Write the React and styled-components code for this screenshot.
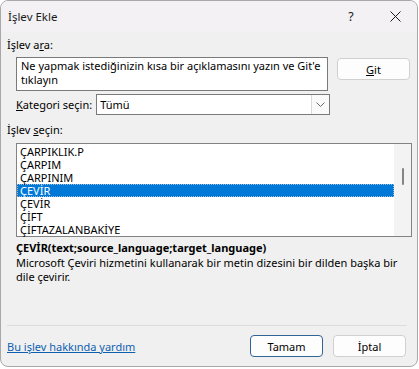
import React from 'react';
import styled, { createGlobalStyle } from 'styled-components';

const GlobalStyle = createGlobalStyle`
  html, body {
    margin: 0;
    padding: 0;
    background: #ffffff;
  }
  body {
    font-family: "Noto Sans", "Open Sans", sans-serif;
    font-size: 11px;
    color: #000;
  }
`;

const Window = styled.div`
  width: 416px;
  height: 365px;
  border: 1px solid #a8a8a8;
  border-radius: 8px;
  overflow: hidden;
  display: flex;
  flex-direction: column;
  background: #f0f0f0;
`;

const TitleBar = styled.div`
  height: 31px;
  display: flex;
  align-items: center;
  padding-left: 7px;
  background: #f3f1f3;
`;

const Title = styled.span`
  flex: 1;
  font-size: 11.5px;
  color: #1b1b1b;
`;

const TitleButton = styled.div`
  width: 44px;
  height: 31px;
  display: flex;
  align-items: center;
  justify-content: center;
  font-size: 12.5px;
  color: #1b1b1b;
`;

const Body = styled.div`
  flex: 1;
  display: flex;
  flex-direction: column;
  padding: 5px 6px 0 6px;
`;

const Label = styled.div`
  line-height: 15px;
`;

const SearchRow = styled.div`
  display: flex;
  align-items: flex-start;
  gap: 9px;
  margin-top: 5px;
  padding-left: 9px;
`;

const SearchBox = styled.div`
  width: 302px;
  height: 30px;
  background: #fff;
  border: 1px solid #7a7a7a;
  padding: 1px 4px;
  line-height: 14px;
`;

const Button = styled.div`
  width: 71px;
  height: 20px;
  border: 1px solid ${(p) => (p.$primary ? '#2f6595' : '#d0d0d0')};
  border-radius: 4px;
  background: #fdfdfd;
  display: flex;
  align-items: center;
  justify-content: center;
  margin-top: ${(p) => p.$top || 0}px;
`;

const CategoryRow = styled.div`
  display: flex;
  align-items: center;
  gap: 4px;
  margin-top: 3px;
  padding-left: 9px;
`;

const Select = styled.div`
  width: 232px;
  height: 19px;
  background: #fff;
  border: 1px solid #7a7a7a;
  display: flex;
  align-items: center;
`;

const SelectValue = styled.span`
  flex: 1;
  padding-left: 3px;
`;

const SelectArrow = styled.div`
  width: 17px;
  height: 19px;
  border-left: 1px solid #d9d9d9;
  background: #fafafa;
  display: flex;
  align-items: center;
  justify-content: center;
`;

const ListLabel = styled(Label)`
  margin-top: 7px;
`;

const ListBox = styled.div`
  margin: 6px 0 0 9px;
  width: 394px;
  height: 92px;
  border: 1px solid #828282;
  background: #fff;
  display: flex;
`;

const Items = styled.div`
  flex: 1;
  padding-top: 1px;
`;

const Item = styled.div`
  height: 13px;
  line-height: 13px;
  padding-left: 3px;
  box-sizing: border-box;
  background: ${(p) => (p.$selected ? '#0078d7' : 'transparent')};
  color: ${(p) => (p.$selected ? '#fff' : '#000')};
  outline: ${(p) => (p.$selected ? '1px dotted #9bb8d8' : 'none')};
  outline-offset: -1px;
`;

const ScrollBar = styled.div`
  width: 17px;
  background: #f3f3f3;
  display: flex;
  justify-content: center;
`;

const Thumb = styled.div`
  width: 2px;
  height: 17px;
  margin-top: 24px;
  background: #858585;
  border-radius: 1px;
`;

const Signature = styled.div`
  margin-top: 3px;
  padding-left: 9px;
  font-weight: 700;
  line-height: 15px;
`;

const Description = styled.div`
  padding-left: 9px;
  line-height: 14px;
  margin-top: 1px;
  width: 392px;
`;

const Separator = styled.div`
  margin-top: auto;
  height: 1px;
  background: #dcdcdc;
  margin-right: 4px;
`;

const Footer = styled.div`
  display: flex;
  align-items: center;
  height: 40px;
  padding-right: 5px;
`;

const HelpLink = styled.a`
  flex: 1;
  color: #0d5fb0;
  text-decoration: underline;
  cursor: pointer;
`;

const FooterButtons = styled.div`
  display: flex;
  gap: 10px;
`;

const functions = [
  'ÇARPIKLIK.P',
  'ÇARPIM',
  'ÇARPINIM',
  'ÇEVİR',
  'ÇEVİR',
  'ÇİFT',
  'ÇİFTAZALANBAKİYE',
];

function CloseIcon() {
  return (
    <svg width="11" height="11" viewBox="0 0 11 11">
      <path d="M0.5 0.5 L10.5 10.5 M10.5 0.5 L0.5 10.5" stroke="#1b1b1b" strokeWidth="1" fill="none" />
    </svg>
  );
}

function ChevronDown() {
  return (
    <svg width="9" height="5" viewBox="0 0 9 5">
      <path d="M0.5 0.5 L4.5 4.5 L8.5 0.5" stroke="#6a6a6a" strokeWidth="1" fill="none" />
    </svg>
  );
}

export default function App() {
  return (
    <>
      <GlobalStyle />
      <Window>
        <TitleBar>
          <Title>İşlev Ekle</Title>
          <TitleButton>?</TitleButton>
          <TitleButton>
            <CloseIcon />
          </TitleButton>
        </TitleBar>
        <Body>
          <Label>
            İşlev a<u>r</u>a:
          </Label>
          <SearchRow>
            <SearchBox>Ne yapmak istediğinizin kısa bir açıklamasını yazın ve Git'e tıklayın</SearchBox>
            <Button $top={1}>
              <u>G</u>it
            </Button>
          </SearchRow>
          <CategoryRow>
            <span>
              <u>K</u>ategori seçin:
            </span>
            <Select>
              <SelectValue>Tümü</SelectValue>
              <SelectArrow>
                <ChevronDown />
              </SelectArrow>
            </Select>
          </CategoryRow>
          <ListLabel>
            İşlev <u>s</u>eçin:
          </ListLabel>
          <ListBox>
            <Items>
              {functions.map((name, i) => (
                <Item key={i} $selected={i === 3}>
                  {name}
                </Item>
              ))}
            </Items>
            <ScrollBar>
              <Thumb />
            </ScrollBar>
          </ListBox>
          <Signature>ÇEVİR(text;source_language;target_language)</Signature>
          <Description>
            Microsoft Çeviri hizmetini kullanarak bir metin dizesini bir dilden başka bir dile çevirir.
          </Description>
          <Separator />
          <Footer>
            <HelpLink>Bu işlev hakkında yardım</HelpLink>
            <FooterButtons>
              <Button $primary>Tamam</Button>
              <Button>İptal</Button>
            </FooterButtons>
          </Footer>
        </Body>
      </Window>
    </>
  );
}
